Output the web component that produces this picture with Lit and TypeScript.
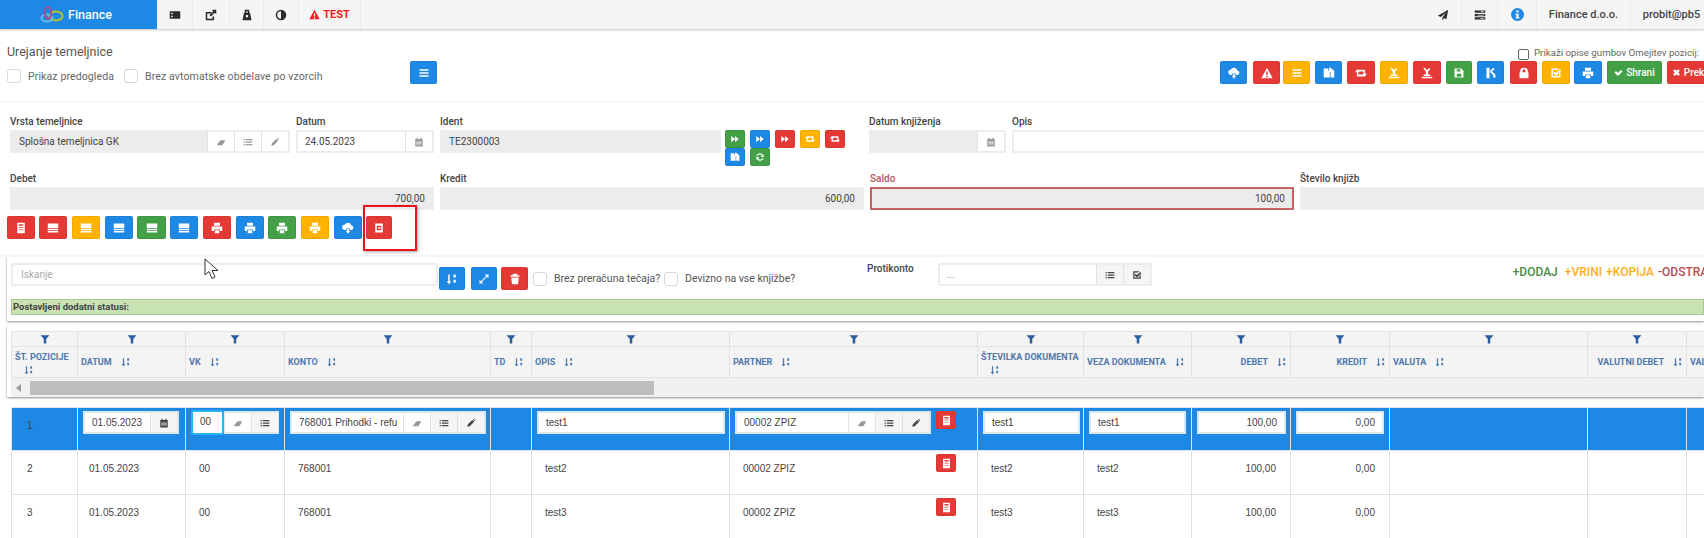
import { html, css, svg, LitElement } from "lit";
import { customElement } from "lit/decorators.js";

const BLUE = "#1e88e5";
const RED = "#e53935";
const YELLOW = "#ffb300";
const GREEN = "#43a047";

const ICONS: Record<string, unknown> = {
  bars: svg`<path d="M2 3h12v2H2zM2 7h12v2H2zM2 11h12v2H2z"/>`,
  list: svg`<path d="M1 3h2v2H1zM1 7h2v2H1zM1 11h2v2H1zM4.500 3H15v2H4.500zM4.500 7H15v2H4.500zM4.500 11H15v2H4.500z"/>`,
  eraser: svg`<path d="M1 13l6-8h8l-5 8z"/>`,
  pencil: svg`<path d="M2 14l1-4 7-7 3 3-7 7zM11 2l1-1 3 3-1 1z"/>`,
  calendar: svg`<path fill-rule="evenodd" d="M4 1h2v2h4V1h2v2h2v12H2V3h2zM4 7v2h2V7zM7 7v2h2V7zM10 7v2h2V7zM4 10v2h2v-2zM7 10v2h2v-2zM10 10v2h2v-2z"/>`,
  forward: svg`<path d="M2 3l6 5-6 5zM8 3l6 5-6 5z"/>`,
  retweet: svg`<path d="M0 7l3-4 3 4H4.500v3H11l2 2.500H2.500V7zM16 9l-3 4-3-4h1.500V6H5L3 3.500h10.500V9z"/>`,
  print: svg`<path fill-rule="evenodd" d="M4 1h8v4H4zM1 6h14v6h-3v-2H4v2H1zM5 11h6v4H5z"/>`,
  cloud: svg`<path d="M4 10.500a3.500 3.500 0 0 1-.5-7A5 5 0 0 1 12.500 4.500 3 3 0 0 1 12 10.500h-1.500v-2h-5v2zM6.500 9.500h3V12H11l-3 3.500L5 12h1.500z"/>`,
  warn: svg`<path fill-rule="evenodd" d="M8 1l7.500 14H.5zM7 6v5h2V6zM7 12v2h2v-2z"/>`,
  copy: svg`<path d="M1 2h6v3h2v9H1zM10 1l5 4v9h-5V7H8V1z"/>`,
  doc: svg`<path fill-rule="evenodd" d="M3 1h10v14H3zM5 3v2h6V3zM5 7v1h6V7zM5 10v1h6v-1z"/>`,
  row: svg`<path d="M1 2h14v6H1zM1 9h14v1.500H1zM1 11.500h14V14H1z"/>`,
  stamp: svg`<path d="M3 1h2l3 3 2-2h3L9.500 6v4h3v2h-9v-2h3V6.500zM1 13h14v2H1z"/>`,
  hdoc: svg`<path fill-rule="evenodd" d="M3 2h10v12H3zM5 5v6h6V5zM7 7h3v2H7z"/>`,
  save: svg`<path fill-rule="evenodd" d="M2 2h9l3 3v9H2zM5 3v3h5V3zM5 9v4h6V9z"/>`,
  share: svg`<path d="M2 1h4v14H2zM7 5l4-4 2 2-4 3 4 3-2 2-4-4zM11 10h3v4h-3z"/>`,
  lock: svg`<path fill-rule="evenodd" d="M3 7V5a5 4 0 0 1 10 0v2h1v8H2V7zM6 7h4V5a2 2 0 0 0-4 0z"/>`,
  checksq: svg`<path fill-rule="evenodd" d="M2 2h10l-2 2H4v8h8V9l2-2v7H2zM6 6l2 2 5-5 2 2-7 7-4-4z"/>`,
  check: svg`<path d="M1 8l2.500-2.500L7 9l5.500-5.500L15 6l-8 8z"/>`,
  times: svg`<path d="M2 5l3-3 3 3 3-3 3 3-3 3 3 3-3 3-3-3-3 3-3-3 3-3z"/>`,
  filter: svg`<path d="M1 2h14L10 8v7H6V8z"/>`,
  sort: svg`<path d="M3 2h2v9h2l-3 4-3-4h2zM10 2h3v4h-3zM10 9h3v4h-3z"/>`,
  expand: svg`<path d="M9 2h5v5l-2-2-7 7 2 2H2V9l2 2 7-7z"/>`,
  trash: svg`<path d="M5 3V1h6v2h3v2H2V3zM3 6h10l-1 9H4z"/>`,
  refresh: svg`<path d="M8 2a6 6 0 0 1 5 3l1-2v5h-5l2-2a4 4 0 0 0-7 0H2a6 6 0 0 1 6-4zM2 8h5L5 10a4 4 0 0 0 7 0h2a6 6 0 0 1-11 1l-1 2z"/>`,
  plane: svg`<path d="M15 1L1 9l4 1.500 7-6-5 7V15l2.500-3 3 1.500z"/>`,
  server: svg`<path fill-rule="evenodd" d="M1 2h14v3H1zM1 6.500h14v3H1zM1 11h14v3H1zM9 3v1h4V3zM5 7.500v1h8v-1zM9 12v1h4v-1z"/>`,
  idcard: svg`<path fill-rule="evenodd" d="M1 3h14v10H1zM3 5v2h2V5zM3 9v2h2V9z"/>`,
  external: svg`<path fill-rule="evenodd" d="M1 4h9v2H3v7h7v-3h2v5H1zM9 1h6v6l-2-2-5 5-2-2 5-5z"/>`,
  bag: svg`<path fill-rule="evenodd" d="M5 1h6v4h1l2 10H2L4 5h1zM7 3v2h2V3zM6.500 8v3h3V8z"/>`,
  contrast: svg`<path fill-rule="evenodd" d="M8 1a7 7 0 1 1 0 14A7 7 0 0 1 8 1zM8 3a5 5 0 0 0 0 10z"/>`,
  info: svg`<path fill-rule="evenodd" d="M8 0a8 8 0 1 1 0 16A8 8 0 0 1 8 0zM6.500 3v2.500h3V3zM5.500 7v1.500h1v3h-1V13h5v-1.500h-1V7z"/>`,
};

const icon = (name: string, size = 12) =>
  html`<svg class="ic" width=${size} height=${size} viewBox="0 0 16 16" fill="currentColor">${ICONS[name]}</svg>`;

type Btn = [string, string, number, number];

const TOP_BUTTONS: Btn[] = [
  ["cloud", BLUE, 27, 0],
  ["warn", RED, 27, 6],
  ["bars", YELLOW, 27, 3],
  ["copy", BLUE, 27, 5],
  ["retweet", RED, 28, 5],
  ["stamp", YELLOW, 28, 5],
  ["stamp", RED, 28, 5],
  ["save", GREEN, 26, 5],
  ["share", BLUE, 27, 5],
  ["lock", RED, 27, 6],
  ["checksq", YELLOW, 28, 5],
  ["print", BLUE, 28, 4],
];

const ACTION_BUTTONS: Btn[] = [
  ["doc", RED, 28, 0],
  ["row", RED, 28, 4],
  ["row", YELLOW, 28, 5],
  ["row", BLUE, 28, 5],
  ["row", GREEN, 29, 4],
  ["row", BLUE, 28, 4],
  ["print", RED, 28, 5],
  ["print", BLUE, 28, 5],
  ["print", GREEN, 28, 4],
  ["print", YELLOW, 28, 5],
  ["cloud", BLUE, 28, 5],
  ["hdoc", RED, 26, 4],
];

const COLUMNS: [string, string][] = [
  ["ŠT. POZICIJE", "wrap"],
  ["DATUM", ""],
  ["VK", ""],
  ["KONTO", ""],
  ["TD", ""],
  ["OPIS", ""],
  ["PARTNER", ""],
  ["ŠTEVILKA DOKUMENTA", "wrap"],
  ["VEZA DOKUMENTA", ""],
  ["DEBET", "right"],
  ["KREDIT", "right"],
  ["VALUTA", ""],
  ["VALUTNI DEBET", "right"],
  ["VALUTNI KREDIT", ""],
];

const ROWS = [
  { n: 2, opis: "test2" },
  { n: 3, opis: "test3" },
];

@customElement("app-root")
export class AppRoot extends LitElement {
  static styles = css`
    :host {
      display: block;
      position: relative;
      width: 1704px;
      height: 538px;
      overflow: hidden;
      background: #fff;
      font-family: "Roboto", sans-serif;
      font-size: 10px;
      color: #444;
    }

    .ic {
      display: block;
      flex: none;
    }

    /* top bar */
    .topbar {
      display: flex;
      height: 29px;
      background: #f5f5f5;
      box-shadow: 0 1px 2px rgba(0, 0, 0, 0.25);
      color: #2b2b2b;
    }

    .brand {
      width: 157px;
      flex: none;
      display: flex;
      align-items: center;
      gap: 4px;
      padding-left: 40px;
      box-sizing: border-box;
      background: #1e88e5;
      color: #fff;
      font-size: 12.5px;
      font-weight: 500;
    }

    .nav {
      display: flex;
      align-items: center;
      justify-content: center;
      flex: none;
      border-right: 1px solid #ececec;
      box-sizing: border-box;
      height: 29px;
    }

    .test {
      gap: 3px;
      color: #f01c1c;
      font-size: 11px;
      font-weight: 700;
    }

    .info {
      color: #1e88e5;
    }

    .nav.text {
      font-size: 11px;
      font-weight: 500;
      color: #444;
      border-right: none;
    }

    .nav.user {
      padding-left: 8px;
      border-left: 1px solid #ececec;
    }

    .spacer {
      flex: 1;
    }

    /* heading */
    .head {
      display: flex;
      height: 74px;
      box-sizing: border-box;
      border-bottom: 2px solid #f6f6f6;
    }

    .head-left {
      width: 410px;
      flex: none;
      padding: 15px 0 0 7px;
      box-sizing: border-box;
    }

    .title {
      font-size: 12.5px;
      line-height: 16px;
      color: #555;
    }

    .checks {
      display: flex;
      align-items: center;
      margin-top: 9px;
      font-size: 10.5px;
      letter-spacing: 0.12px;
      color: #666;
    }

    .cb {
      width: 14px;
      height: 14px;
      flex: none;
      box-sizing: border-box;
      border: 1px solid #d8d8d8;
      border-radius: 3px;
      background: #fff;
    }

    .checks .cb + span {
      margin: 0 10px 0 7px;
    }

    .head-btn {
      margin-top: 32px;
    }

    .head-right {
      width: 484px;
      flex: none;
      padding-top: 15px;
      white-space: nowrap;
      overflow: hidden;
    }

    .opts {
      display: flex;
      align-items: center;
      height: 17px;
      padding-left: 298px;
      font-size: 9.7px;
      color: #666;
    }

    .native-cb {
      width: 11px;
      height: 11px;
      margin: 3px 5px 0 0;
      border: 1px solid #666;
      border-radius: 2px;
      flex: none;
      box-sizing: border-box;
    }

    .btns {
      display: flex;
    }

    .btn {
      display: flex;
      align-items: center;
      justify-content: center;
      flex: none;
      gap: 3px;
      height: 23px;
      box-sizing: border-box;
      border-radius: 2px;
      border: 1px solid rgba(0, 0, 0, 0.06);
      color: #fff;
      font-size: 10px;
      font-weight: 500;
    }

    .btn.small,
    .btn.rowbtn {
      width: 20px;
      height: 18px;
    }

    /* form */
    .form {
      position: relative;
      height: 154px;
      box-sizing: border-box;
      padding: 12px 0 0 10px;
      border-bottom: 2px solid #f6f6f6;
    }

    .frow {
      display: flex;
      gap: 6px;
      height: 38px;
    }

    .frow + .frow {
      margin-top: 19px;
    }

    .field {
      flex: none;
    }

    .field label {
      display: block;
      height: 15px;
      line-height: 14px;
      font-size: 10px;
      font-weight: 500;
      color: #444;
    }

    .field.err label {
      color: #b55a5a;
    }

    .inp {
      display: flex;
      height: 23px;
      box-sizing: border-box;
      background: #fff;
      border: 2px solid #e9eef3;
      font-size: 10px;
      color: #444;
    }

    .inp .val {
      flex: 1;
      min-width: 0;
      line-height: 19px;
      padding: 0 7px;
      white-space: nowrap;
      overflow: hidden;
    }

    .inp.off .val {
      background: #ececec;
    }

    .inp.right .val {
      text-align: right;
    }

    .inp.err {
      border-color: #c26464;
    }

    .inp.err .val {
      background: #ececec;
    }

    .add {
      width: 27px;
      flex: none;
      display: flex;
      align-items: center;
      justify-content: center;
      box-sizing: border-box;
      border-left: 1px solid #e2e2e2;
      background: #fff;
      color: #999;
    }

    .add.grey {
      background: #f5f5f5;
      color: #444;
    }

    .actions {
      width: 138px;
      flex: none;
      display: flex;
      flex-wrap: wrap;
      align-content: flex-start;
      margin: 15px 0 0 -2px;
      gap: 0 5px;
    }

    .action-btns {
      display: flex;
      margin: 6px 0 0 -3px;
    }

    .highlight {
      position: absolute;
      left: 363px;
      top: 102px;
      width: 54px;
      height: 46px;
      box-sizing: border-box;
      border: 2px solid #e8141c;
      box-shadow: 1px 1px 3px rgba(0, 0, 0, 0.35);
    }

    /* search card */
    .card {
      margin-left: 7px;
      background: #fff;
      box-shadow: 0 1px 2px rgba(0, 0, 0, 0.45);
    }

    .search {
      height: 64px;
      box-sizing: border-box;
      padding: 6px 0 0 4px;
      overflow: hidden;
    }

    .tools {
      display: flex;
      align-items: flex-start;
      height: 30px;
      white-space: nowrap;
      font-size: 10.5px;
      color: #555;
    }

    .tools .btn {
      margin-top: 4px;
    }

    .search-inp {
      width: 427px;
      height: 23px;
      flex: none;
      box-sizing: border-box;
      border: 2px solid #e9eef3;
      padding-left: 8px;
      line-height: 19px;
      font-size: 10px;
      color: #aaa;
    }

    .tools .cb {
      margin-top: 9px;
    }

    .tools .lbl {
      flex: none;
      margin: 9px 0 0 7px;
      line-height: 14px;
    }

    .proti {
      flex: none;
      margin: 0 24px 0 69px;
      font-size: 10px;
      font-weight: 500;
      line-height: 12px;
      color: #444;
    }

    .tools .inp {
      width: 214px;
      flex: none;
    }

    .tools .inp .val {
      color: #999;
    }

    .legend {
      flex: none;
      margin-left: 361px;
      display: flex;
      gap: 4px;
      font-size: 12px;
      font-weight: 500;
      line-height: 18px;
    }

    .legend span:first-child {
      margin-right: 3px;
    }

    .statuses {
      height: 16px;
      margin-top: 6px;
      box-sizing: border-box;
      padding-left: 1px;
      background: #c9e2b3;
      border: 1px solid #a8c98e;
      font-size: 9.5px;
      font-weight: 700;
      line-height: 14px;
      color: #444;
    }

    /* table */
    .head-card {
      margin-top: 5px;
      padding: 5px 0 0 4px;
      height: 71px;
      box-sizing: border-box;
      overflow: hidden;
    }

    .grid {
      display: grid;
      grid-template-columns: 66px 108px 99px 206px 41px 198px 248px 106px 108px 99px 99px 198px 99px 120px;
    }

    .hcell {
      box-sizing: border-box;
      background: #f4f4f4;
      border-left: 1px solid #e2e2e2;
      border-top: 1px solid #e2e2e2;
      border-bottom: 1px solid #e2e2e2;
      color: #2a5f9e;
    }

    .fcell {
      display: flex;
      align-items: center;
      justify-content: center;
      height: 15px;
      border-bottom: none;
    }

    .lcell {
      display: flex;
      align-items: center;
      gap: 9px;
      height: 32px;
      padding: 0 3px;
      font-size: 9px;
      font-weight: 700;
      color: #4f78ad;
    }

    .lcell.right {
      justify-content: flex-end;
    }

    .lcell.wrap {
      display: block;
      padding-top: 4px;
      line-height: 13px;
    }

    .lcell.wrap .ic {
      margin: 1px 0 0 9px;
    }

    .hscroll {
      display: flex;
      align-items: center;
      height: 20px;
      background: #f0f0f0;
      padding-left: 5px;
    }

    .thumb {
      width: 624px;
      height: 14px;
      margin-left: 9px;
      background: #bdbdbd;
    }

    .arrow {
      width: 0;
      height: 0;
      border: 4px solid transparent;
      border-right: 5px solid #999;
      border-left: none;
    }

    .body {
      margin: 10px 0 0 11px;
      font-family: "Liberation Sans", Arial, sans-serif;
      font-size: 10px;
      color: #444;
    }

    .cell {
      box-sizing: border-box;
      height: 44px;
      padding: 12px 0 0 13px;
      border-left: 1px solid #e0e0e0;
      border-bottom: 1px solid #e0e0e0;
      line-height: 12px;
      white-space: nowrap;
    }

    .cell.date {
      padding-left: 11px;
    }

    .cell.first {
      padding-left: 15px;
    }

    .cell.num {
      text-align: right;
      padding-right: 14px;
    }

    .cell.split {
      display: flex;
      justify-content: space-between;
      padding: 3px 21px 0 13px;
    }

    .cell.split > span {
      margin-top: 9px;
    }

    .sel .cell {
      background: #1e88e5;
      padding: 3px 0 0 5px;
      border-left-color: #d9e6f2;
      border-bottom-color: #d9e6f2;
      border-top: 1px solid #d9e6f2;
    }

    .sel .cell.first {
      padding: 12px 0 0 15px;
    }

    .sel .cell.flexed {
      display: flex;
      gap: 5px;
      align-items: flex-start;
    }

    .sel .inp {
      border-color: #dbe7f2;
    }

    .inp.focus {
      border: 2px solid #29b6f6;
      border-radius: 3px;
      margin-top: -1px;
      height: 25px;
    }

    .vk {
      display: flex;
      width: 88px;
    }

    .vk-add {
      width: 55px;
      border-left: none;
    }

    .cursor {
      position: absolute;
      left: 204px;
      top: 258px;
    }
  `;

  private button([name, color, width, gap]: Btn) {
    return html`<div
      class="btn"
      style="background:${color};width:${width}px;margin-left:${gap}px"
    >
      ${icon(name)}
    </div>`;
  }

  private small(name: string, color: string) {
    return html`<div class="btn small" style="background:${color}">
      ${icon(name, 10)}
    </div>`;
  }

  private rowButton() {
    return html`<div class="btn rowbtn" style="background:${RED}">
      ${icon("doc", 11)}
    </div>`;
  }

  private addons(names: string[], grey: string[] = []) {
    return names.map(
      (n) =>
        html`<div class="add ${grey.includes(n) ? "grey" : ""}">
          ${icon(n, 10)}
        </div>`
    );
  }

  private field(
    label: string,
    width: number,
    value: string,
    cls = "",
    addons: string[] = []
  ) {
    return html`<div
      class="field ${cls.includes("err") ? "err" : ""}"
      style="width:${width}px"
    >
      <label>${label}</label>
      <div class="inp ${cls}">
        <div class="val">${value}</div>
        ${this.addons(addons)}
      </div>
    </div>`;
  }

  private renderTopbar() {
    const nav = (w: number, name: string) =>
      html`<div class="nav" style="width:${w}px">${icon(name, 12)}</div>`;
    return html`<div class="topbar">
      <div class="brand">
        <svg width="24" height="18" viewBox="0 0 24 18" fill="none" stroke-width="2">
          <ellipse cx="16" cy="10" rx="6.500" ry="4.500" stroke="#b5c334" />
          <ellipse cx="7" cy="12" rx="5.500" ry="3.500" stroke="#62b9e8" />
          <ellipse cx="8" cy="7" rx="3" ry="6" stroke="#b0489a" />
        </svg>
        Finance
      </div>
      ${nav(36, "idcard")} ${nav(37, "external")} ${nav(34, "bag")}
      ${nav(35, "contrast")}
      <div class="nav test" style="width:62px">${icon("warn", 11)} TEST</div>
      <div class="spacer"></div>
      ${nav(37, "plane")} ${nav(36, "server")}
      <div class="nav info" style="width:39px">${icon("info", 13)}</div>
      <div class="nav text" style="width:93px">Finance d.o.o.</div>
      <div class="nav text user" style="width:74px">probit@pb5</div>
    </div>`;
  }

  private renderHead() {
    return html`<div class="head">
      <div class="head-left">
        <div class="title">Urejanje temeljnice</div>
        <div class="checks">
          <div class="cb"></div>
          <span>Prikaz predogleda</span>
          <div class="cb"></div>
          <span>Brez avtomatske obdelave po vzorcih</span>
        </div>
      </div>
      <div class="head-btn">${this.button(["bars", BLUE, 27, 0])}</div>
      <div class="spacer"></div>
      <div class="head-right">
        <div class="opts">
          <div class="native-cb"></div>
          Prikaži opise gumbov Omejitev pozicij:
        </div>
        <div class="btns">
          ${TOP_BUTTONS.map((b) => this.button(b))}
          <div class="btn" style="background:${GREEN};width:55px;margin-left:5px">
            ${icon("check", 9)} Shrani
          </div>
          <div class="btn" style="background:${RED};width:55px;margin-left:5px">
            ${icon("times", 9)} Prekliči
          </div>
        </div>
      </div>
    </div>`;
  }

  private renderForm() {
    return html`<div class="form">
      <div class="frow">
        ${this.field("Vrsta temeljnice", 280, "Splošna temeljnica GK", "off", [
          "eraser",
          "list",
          "pencil",
        ])}
        ${this.field("Datum", 138, "24.05.2023", "", ["calendar"])}
        ${this.field("Ident", 281, "TE2300003", "off")}
        <div class="actions">
          ${this.small("forward", GREEN)} ${this.small("forward", BLUE)}
          ${this.small("forward", RED)} ${this.small("retweet", YELLOW)}
          ${this.small("retweet", RED)} ${this.small("copy", BLUE)}
          ${this.small("refresh", GREEN)}
        </div>
        ${this.field("Datum knjiženja", 137, "", "off", ["calendar"])}
        ${this.field("Opis", 700, "")}
      </div>
      <div class="frow">
        ${this.field("Debet", 424, "700,00", "off right")}
        ${this.field("Kredit", 424, "600,00", "off right")}
        ${this.field("Saldo", 424, "100,00", "err right")}
        ${this.field("Število knjižb", 424, "", "off")}
      </div>
      <div class="action-btns">
        ${ACTION_BUTTONS.map((b) => this.button(b))}
      </div>
      <div class="highlight"></div>
    </div>`;
  }

  private renderSearch() {
    return html`<div class="card search">
      <div class="tools">
        <div class="search-inp">Iskanje</div>
        ${this.button(["sort", BLUE, 26, 1])}
        ${this.button(["expand", BLUE, 26, 6])}
        ${this.button(["trash", RED, 27, 4])}
        <div class="cb" style="margin-left:5px"></div>
        <div class="lbl" style="width:110px">Brez preračuna tečaja?</div>
        <div class="cb"></div>
        <div class="lbl" style="width:113px">Devizno na vse knjižbe?</div>
        <div class="proti">Protikonto</div>
        <div class="inp">
          <div class="val">...</div>
          <div class="add grey">${icon("list", 10)}</div>
          <div class="add grey">${icon("checksq", 10)}</div>
        </div>
        <div class="legend">
          <span style="color:#4a8a4a">+DODAJ</span>
          <span style="color:#ffae1a">+VRINI</span>
          <span style="color:#ffae1a">+KOPIJA</span>
          <span style="color:#b34d4d">-ODSTRANI</span>
        </div>
      </div>
      <div class="statuses">Postavljeni dodatni statusi:</div>
    </div>`;
  }

  private renderTableHead() {
    return html`<div class="card head-card">
      <div class="grid">
        ${COLUMNS.map(
          () => html`<div class="hcell fcell">${icon("filter", 10)}</div>`
        )}
        ${COLUMNS.map(
          ([name, cls]) =>
            html`<div class="hcell lcell ${cls}">
              <span>${name}</span>${icon("sort", 10)}
            </div>`
        )}
      </div>
      <div class="hscroll">
        <div class="arrow"></div>
        <div class="thumb"></div>
      </div>
    </div>`;
  }

  private renderSelected() {
    const input = (width: number, value: string, cls = "") =>
      html`<div class="inp ${cls}" style="width:${width}px">
        <div class="val">${value}</div>
      </div>`;
    const group = (
      width: number,
      value: string,
      addons: string[],
      grey: string[]
    ) =>
      html`<div class="inp" style="width:${width}px">
        <div class="val">${value}</div>
        ${this.addons(addons, grey)}
      </div>`;
    return html`<div class="grid sel">
      <div class="cell first">1</div>
      <div class="cell">
        ${group(96, "01.05.2023", ["calendar"], ["calendar"])}
      </div>
      <div class="cell">
        <div class="vk">
          ${input(33, "00", "focus")}
          <div class="inp vk-add">
            ${this.addons(["eraser", "list"], ["list"])}
          </div>
        </div>
      </div>
      <div class="cell">
        ${group(196, "768001 Prihodki - refu", ["eraser", "list", "pencil"], ["list", "pencil"])}
      </div>
      <div class="cell"></div>
      <div class="cell">${input(188, "test1")}</div>
      <div class="cell flexed">
        ${group(196, "00002 ZPIZ", ["eraser", "list", "pencil"], ["list", "pencil"])}
        ${this.rowButton()}
      </div>
      <div class="cell">${input(97, "test1")}</div>
      <div class="cell">${input(97, "test1")}</div>
      <div class="cell">${input(89, "100,00", "right")}</div>
      <div class="cell">${input(88, "0,00", "right")}</div>
      <div class="cell"></div>
      <div class="cell"></div>
      <div class="cell"></div>
    </div>`;
  }

  private renderRow(row: { n: number; opis: string }) {
    return html`<div class="grid">
      <div class="cell first">${row.n}</div>
      <div class="cell date">01.05.2023</div>
      <div class="cell">00</div>
      <div class="cell">768001</div>
      <div class="cell"></div>
      <div class="cell">${row.opis}</div>
      <div class="cell split">
        <span>00002 ZPIZ</span>
        ${this.rowButton()}
      </div>
      <div class="cell">${row.opis}</div>
      <div class="cell">${row.opis}</div>
      <div class="cell num">100,00</div>
      <div class="cell num">0,00</div>
      <div class="cell"></div>
      <div class="cell"></div>
      <div class="cell"></div>
    </div>`;
  }

  render() {
    return html`
      ${this.renderTopbar()} ${this.renderHead()} ${this.renderForm()}
      ${this.renderSearch()} ${this.renderTableHead()}
      <div class="body">
        ${this.renderSelected()} ${ROWS.map((r) => this.renderRow(r))}
      </div>
      <svg class="cursor" width="17" height="23" viewBox="0 0 17 23">
        <path
          d="M1 1v16l4-3.500 3 7 3-1.500-3-6.500h6z"
          fill="#fff"
          stroke="#333"
          stroke-width="1"
        />
      </svg>
    `;
  }
}
